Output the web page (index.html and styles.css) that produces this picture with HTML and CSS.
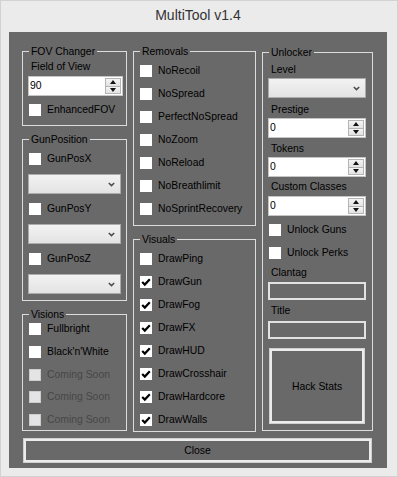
FILE: index.html
```html
<!DOCTYPE html>
<html lang="en">
<head>
  <meta charset="UTF-8" />
  <title>MultiTool v1.4</title>
  <link rel="stylesheet" href="styles.css">
</head>
<body>
  <div class="window">
    <div class="titlebar">MultiTool v1.4</div>
    <div class="client">
      <div class="columns">
        <div class="col col-left">
          <fieldset class="group fov">
            <legend>FOV Changer</legend>
            <div class="lbl fov-lbl">Field of View</div>
            <div class="spin fov-spin">
              <span class="val">90</span>
              <span class="spin-btns"><span class="sb up"></span><span class="sb down"></span></span>
            </div>
            <div class="check fov-check"><span class="box"></span>EnhancedFOV</div>
          </fieldset>

          <fieldset class="group gunpos">
            <legend>GunPosition</legend>
            <div class="list gun-list">
              <div class="check"><span class="box"></span>GunPosX</div>
              <div class="select gun-select"><svg width="7" height="5" viewBox="0 0 7 5"><path d="M0.8 1 L3.5 3.6 L6.2 1" fill="none" stroke="#4a4a4a" stroke-width="1.5"/></svg></div>
              <div class="check"><span class="box"></span>GunPosY</div>
              <div class="select gun-select"><svg width="7" height="5" viewBox="0 0 7 5"><path d="M0.8 1 L3.5 3.6 L6.2 1" fill="none" stroke="#4a4a4a" stroke-width="1.5"/></svg></div>
              <div class="check"><span class="box"></span>GunPosZ</div>
              <div class="select gun-select"><svg width="7" height="5" viewBox="0 0 7 5"><path d="M0.8 1 L3.5 3.6 L6.2 1" fill="none" stroke="#4a4a4a" stroke-width="1.5"/></svg></div>
            </div>
          </fieldset>

          <fieldset class="group visions">
            <legend>Visions</legend>
            <div class="list vis-list">
              <div class="check"><span class="box"></span>Fullbright</div>
              <div class="check"><span class="box"></span>Black'n'White</div>
              <div class="check disabled"><span class="box"></span>Coming Soon</div>
              <div class="check disabled"><span class="box"></span>Coming Soon</div>
              <div class="check disabled"><span class="box"></span>Coming Soon</div>
            </div>
          </fieldset>
        </div>

        <div class="col col-mid">
          <fieldset class="group removals">
            <legend>Removals</legend>
            <div class="list check-list">
              <div class="check"><span class="box"></span>NoRecoil</div>
              <div class="check"><span class="box"></span>NoSpread</div>
              <div class="check"><span class="box"></span>PerfectNoSpread</div>
              <div class="check"><span class="box"></span>NoZoom</div>
              <div class="check"><span class="box"></span>NoReload</div>
              <div class="check"><span class="box"></span>NoBreathlimit</div>
              <div class="check"><span class="box"></span>NoSprintRecovery</div>
            </div>
          </fieldset>

          <fieldset class="group visuals">
            <legend>Visuals</legend>
            <div class="list check-list">
              <div class="check"><span class="box"></span>DrawPing</div>
              <div class="check"><span class="box"><svg width="12" height="12" viewBox="0 0 12 12"><path d="M2.2 6 L4.8 8.6 L9.8 3.2" fill="none" stroke="#000" stroke-width="2.2"/></svg></span>DrawGun</div>
              <div class="check"><span class="box"><svg width="12" height="12" viewBox="0 0 12 12"><path d="M2.2 6 L4.8 8.6 L9.8 3.2" fill="none" stroke="#000" stroke-width="2.2"/></svg></span>DrawFog</div>
              <div class="check"><span class="box"><svg width="12" height="12" viewBox="0 0 12 12"><path d="M2.2 6 L4.8 8.6 L9.8 3.2" fill="none" stroke="#000" stroke-width="2.2"/></svg></span>DrawFX</div>
              <div class="check"><span class="box"><svg width="12" height="12" viewBox="0 0 12 12"><path d="M2.2 6 L4.8 8.6 L9.8 3.2" fill="none" stroke="#000" stroke-width="2.2"/></svg></span>DrawHUD</div>
              <div class="check"><span class="box"><svg width="12" height="12" viewBox="0 0 12 12"><path d="M2.2 6 L4.8 8.6 L9.8 3.2" fill="none" stroke="#000" stroke-width="2.2"/></svg></span>DrawCrosshair</div>
              <div class="check"><span class="box"><svg width="12" height="12" viewBox="0 0 12 12"><path d="M2.2 6 L4.8 8.6 L9.8 3.2" fill="none" stroke="#000" stroke-width="2.2"/></svg></span>DrawHardcore</div>
              <div class="check"><span class="box"><svg width="12" height="12" viewBox="0 0 12 12"><path d="M2.2 6 L4.8 8.6 L9.8 3.2" fill="none" stroke="#000" stroke-width="2.2"/></svg></span>DrawWalls</div>
            </div>
          </fieldset>
        </div>

        <div class="col col-right">
          <fieldset class="group unlocker">
            <legend>Unlocker</legend>
            <div class="lbl u-level">Level</div>
            <div class="select u-select"><svg width="7" height="5" viewBox="0 0 7 5"><path d="M0.8 1 L3.5 3.6 L6.2 1" fill="none" stroke="#4a4a4a" stroke-width="1.5"/></svg></div>
            <div class="lbl u-prestige">Prestige</div>
            <div class="spin u-spin">
              <span class="val">0</span>
              <span class="spin-btns"><span class="sb up"></span><span class="sb down"></span></span>
            </div>
            <div class="lbl u-tokens">Tokens</div>
            <div class="spin u-spin">
              <span class="val">0</span>
              <span class="spin-btns"><span class="sb up"></span><span class="sb down"></span></span>
            </div>
            <div class="lbl u-classes">Custom Classes</div>
            <div class="spin u-spin u-spin-last">
              <span class="val">0</span>
              <span class="spin-btns"><span class="sb up"></span><span class="sb down"></span></span>
            </div>
            <div class="check u-guns"><span class="box"></span>Unlock Guns</div>
            <div class="check u-perks"><span class="box"></span>Unlock Perks</div>
            <div class="lbl u-clantag">Clantag</div>
            <div class="field u-field"></div>
            <div class="lbl u-title">Title</div>
            <div class="field u-field"></div>
            <button class="btn hack">Hack Stats</button>
          </fieldset>
        </div>
      </div>
      <button class="btn close">Close</button>
    </div>
  </div>
</body>
</html>
```

FILE: styles.css
```css
* {
  box-sizing: border-box;
}
body {
  margin: 0;
  background: #ebebeb;
  font-family: "Liberation Sans", Arial, sans-serif;
  font-size: 10.4px;
  color: #000;
}
.window {
  width: 398px;
  height: 477px;
  display: flex;
  flex-direction: column;
  background: #ebebeb;
  border: 1px solid #d2d2d2;
  padding: 0 10px 8px 8px;
}
.titlebar {
  height: 31px;
  padding-bottom: 4px;
  display: flex;
  align-items: center;
  justify-content: center;
  font-size: 14px;
  color: #333;
}
.client {
  flex: 1;
  background: #696969;
  padding: 13px 14px 5px 13px;
  display: flex;
  flex-direction: column;
  gap: 6px;
}
.columns {
  display: flex;
  gap: 6px;
  height: 387px;
  align-items: flex-start;
}
.col {
  display: flex;
  flex-direction: column;
  gap: 7px;
}
.col-left { width: 105px; }
.col-mid { width: 123px; }
.col-right { width: 111px; }

/* group boxes */
.group {
  margin: 0;
  min-width: 0;
  border: 1px solid #dcdcdc;
  padding: 0 2px 0 5px;
}
.group legend {
  margin-left: 1px;
  padding: 0 2px;
  line-height: 13px;
}
.fov { height: 81px; }
.gunpos { height: 168px; }
.visions { height: 123px; }
.removals { height: 181px; }
.visuals { height: 199px; }
.unlocker {
  height: 385px;
  margin-top: 1px;
}

.lbl {
  line-height: 13px;
  padding-left: 3px;
}
.list {
  display: flex;
  flex-direction: column;
}
.gun-list { gap: 8px; margin-top: 6px; }
.vis-list { gap: 8.75px; margin-top: 1px; }
.check-list { gap: 9px; margin-top: 6px; }

/* checkbox */
.check {
  display: flex;
  align-items: center;
  height: 14px;
  line-height: 14px;
  margin-left: 1px;
  white-space: nowrap;
}
.box {
  width: 12px;
  height: 12px;
  flex: none;
  margin-right: 6px;
  background: #fff;
}
.box svg {
  display: block;
}
.check.disabled {
  color: #474747;
}
.check.disabled .box {
  background: #e4e4e4;
  border: 1px solid #cdcdcd;
}

/* numeric up-down */
.spin {
  display: flex;
  height: 20px;
  background: #fff;
  border: 1px solid #c6c6c6;
}
.spin .val {
  flex: 1;
  line-height: 18px;
  padding-left: 1px;
}
.spin-btns {
  width: 17px;
  padding: 1px 1px 1px 0;
  display: flex;
  flex-direction: column;
}
.sb {
  flex: 1;
  display: flex;
  align-items: center;
  justify-content: center;
  background: linear-gradient(#f4f4f4, #e2e2e2);
  border: 1px solid #b4b4b4;
}
.sb.down {
  border-top: none;
}
.sb.up::after {
  content: "";
  border-left: 3px solid transparent;
  border-right: 3px solid transparent;
  border-bottom: 4px solid #111;
}
.sb.down::after {
  content: "";
  border-left: 3px solid transparent;
  border-right: 3px solid transparent;
  border-top: 4px solid #111;
}

/* combo box */
.select {
  height: 20px;
  display: flex;
  align-items: center;
  justify-content: flex-end;
  padding: 1px 5px 0 0;
  border: 1px solid #acacac;
  background: linear-gradient(#f2f2f2, #e3e3e3);
}
.select svg {
  display: block;
}
.gun-select { width: 93px; }

.fov-lbl { margin-top: 2px; }
.fov-spin { width: 95px; margin-top: 3px; }
.fov-check { margin-top: 7px; }

/* unlocker column */
.u-level { margin-top: 4px; }
.u-select { width: 98px; margin-top: 2px; }
.u-prestige { margin-top: 5px; }
.u-tokens { margin-top: 4px; }
.u-classes { margin-top: 3px; }
.u-spin { width: 98px; margin-top: 2px; }
.u-spin-last { margin-top: 3px; }
.u-guns { margin-top: 7px; }
.u-perks { margin-top: 9px; }
.u-clantag { margin-top: 6px; }
.u-title { margin-top: 4px; }
.field {
  height: 18px;
  border: 2px solid #e2e2e2;
  background: #696969;
}
.u-field { width: 98px; margin-top: 3px; }
.u-title + .u-field { margin-top: 4px; }

/* buttons */
.btn {
  display: block;
  font-family: inherit;
  font-size: 10.4px;
  color: #000;
  background: #696969;
  border: 1px solid #d0d0d0;
  box-shadow: inset 0 0 0 2px #ececec;
  padding: 0;
}
.hack {
  width: 96px;
  height: 76px;
  margin: 9px 0 0 1px;
}
.close {
  width: 349px;
  height: 25px;
  margin-left: 1px;
}
```
